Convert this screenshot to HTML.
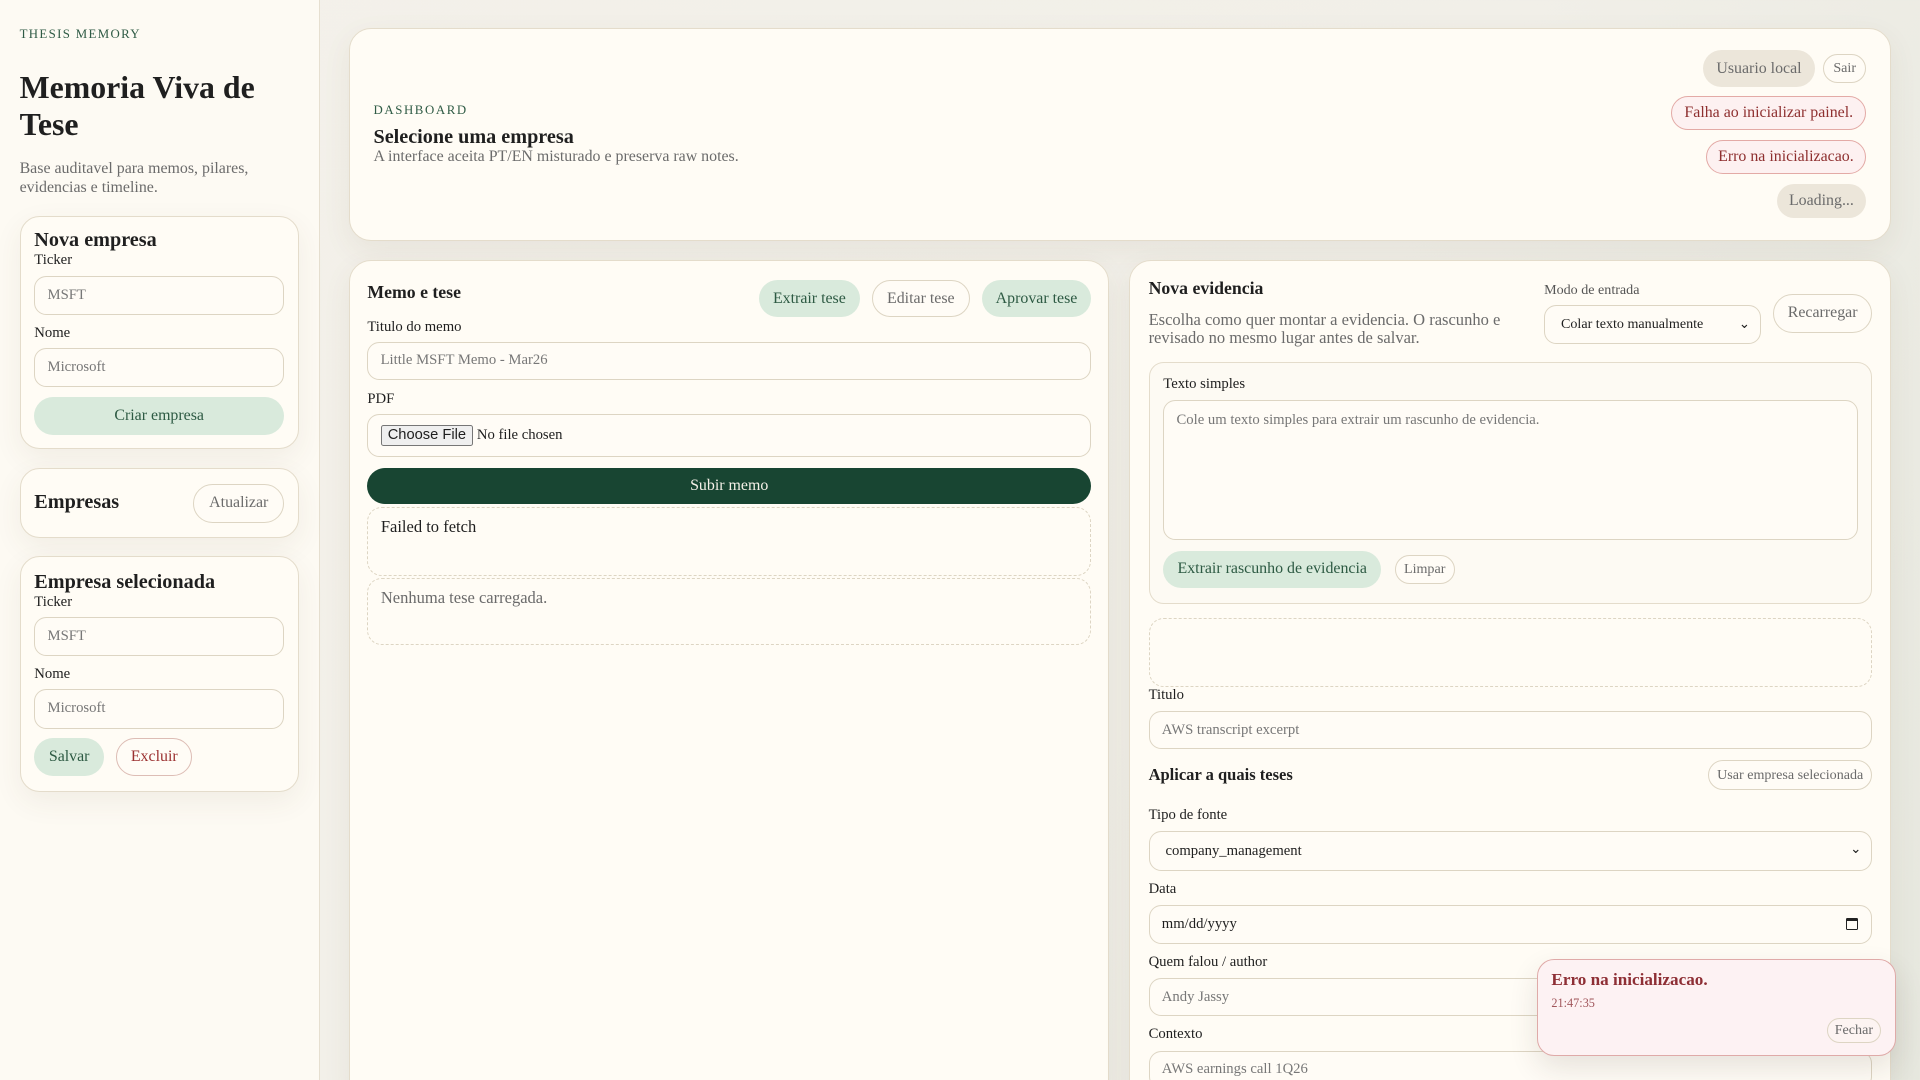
<!DOCTYPE html>
<html><head><meta charset="utf-8">
<style>
html{margin:0;padding:0;width:1920px;height:1080px;overflow:hidden}
body{margin:0;padding:0;width:1568px;height:882px;overflow:hidden;zoom:1.22449;font-family:"Liberation Serif",serif;color:#1f1f1f;background:linear-gradient(120deg,#f4f1ea 0%,#f1efe8 60%,#e6e7de 100%);position:relative}
.a{position:absolute;box-sizing:border-box}
.t{position:absolute;white-space:nowrap;line-height:1}
.card{position:absolute;box-sizing:border-box;background:#fffcf5;border:1px solid #e4dccb;border-radius:16px;box-shadow:0 8px 24px rgba(80,70,40,.07)}
.inp{position:absolute;box-sizing:border-box;background:#fffcf6;border:1px solid #ddd5c3;border-radius:10px;color:#777;font-size:12px;display:flex;align-items:center;padding-left:10px}
.btn{position:absolute;box-sizing:border-box;border-radius:16px;display:flex;align-items:center;justify-content:center;font-size:13px;white-space:nowrap}
.g{background:#d9eadc;color:#2d5a43}
.o{border:1px solid #ddd5c3;color:#6b6b6b;background:#fffcf6}
.lbl{position:absolute;font-size:12px;line-height:1;white-space:nowrap}
.dash{position:absolute;box-sizing:border-box;border:1px dashed #ddd5c3;border-radius:12px}
</style></head><body>
<div class="a" style="left:0;top:0;width:261px;height:882px;background:#fdfaf3;border-right:1px solid #e6dfd0"></div>
<div class="t" style="left:16px;top:23px;font-size:10.5px;letter-spacing:1.1px;color:#2f5b45">THESIS MEMORY</div>
<div class="t" style="left:16px;top:57px;font-size:26px;font-weight:bold;line-height:30px;white-space:normal;width:230px">Memoria Viva de Tese</div>
<div class="t" style="left:16px;top:131px;font-size:13px;line-height:15px;color:#6b6b6b;white-space:normal;width:230px">Base auditavel para memos, pilares, evidencias e timeline.</div>

<div class="card" style="left:16px;top:176px;width:228px;height:191px"></div>
<div class="t" style="left:28px;top:188px;font-size:16.5px;font-weight:bold">Nova empresa</div>
<div class="lbl" style="left:28px;top:207px">Ticker</div>
<div class="inp" style="left:28px;top:225px;width:204px;height:32px">MSFT</div>
<div class="lbl" style="left:28px;top:266px">Nome</div>
<div class="inp" style="left:28px;top:284px;width:204px;height:32px">Microsoft</div>
<div class="btn g" style="left:28px;top:324px;width:204px;height:31px">Criar empresa</div>

<div class="card" style="left:16px;top:382px;width:228px;height:57px"></div>
<div class="t" style="left:28px;top:402px;font-size:16.5px;font-weight:bold">Empresas</div>
<div class="btn o" style="left:158px;top:395px;width:74px;height:32px">Atualizar</div>

<div class="card" style="left:16px;top:454px;width:228px;height:193px"></div>
<div class="t" style="left:28px;top:467px;font-size:16.5px;font-weight:bold">Empresa selecionada</div>
<div class="lbl" style="left:28px;top:486px">Ticker</div>
<div class="inp" style="left:28px;top:504px;width:204px;height:32px">MSFT</div>
<div class="lbl" style="left:28px;top:545px">Nome</div>
<div class="inp" style="left:28px;top:563px;width:204px;height:32px">Microsoft</div>
<div class="btn g" style="left:28px;top:603px;width:57px;height:31px">Salvar</div>
<div class="btn o" style="left:95px;top:603px;width:62px;height:31px;color:#9b3030;border-color:#ddbdb5">Excluir</div>

<div class="card" style="left:285px;top:23px;width:1259px;height:174px;border-radius:18px"></div>
<div class="t" style="left:305px;top:85px;font-size:10.5px;letter-spacing:1.3px;color:#2f5b45">DASHBOARD</div>
<div class="t" style="left:305px;top:104px;font-size:16.5px;font-weight:bold">Selecione uma empresa</div>
<div class="t" style="left:305px;top:122px;font-size:13px;color:#6b6b6b">A interface aceita PT/EN misturado e preserva raw notes.</div>
<div class="btn" style="left:1391px;top:41px;width:91px;height:30px;background:#ece6da;color:#6b6b6b">Usuario local</div>
<div class="btn o" style="left:1489px;top:44px;width:35px;height:24px;font-size:11.5px">Sair</div>
<div class="btn" style="left:1365px;top:78px;width:159px;height:28px;background:#fdf1f1;border:1px solid #e3aaa6;color:#8e2f2f">Falha ao inicializar painel.</div>
<div class="btn" style="left:1393px;top:114px;width:131px;height:28px;background:#fdf1f1;border:1px solid #e3aaa6;color:#8e2f2f">Erro na inicializacao.</div>
<div class="btn" style="left:1451px;top:150px;width:73px;height:28px;background:#ece6da;color:#6b6b6b">Loading...</div>

<div class="card" style="left:285px;top:212px;width:621px;height:690px;border-radius:18px"></div>
<div class="t" style="left:300px;top:232px;font-size:14.5px;font-weight:bold">Memo e tese</div>
<div class="btn g" style="left:620px;top:229px;width:82px;height:30px">Extrair tese</div>
<div class="btn o" style="left:712px;top:229px;width:80px;height:30px">Editar tese</div>
<div class="btn g" style="left:802px;top:229px;width:89px;height:30px">Aprovar tese</div>
<div class="lbl" style="left:300px;top:261px">Titulo do memo</div>
<div class="inp" style="left:300px;top:279px;width:591px;height:31px">Little MSFT Memo - Mar26</div>
<div class="lbl" style="left:300px;top:320px">PDF</div>
<div class="inp" style="left:300px;top:338px;width:591px;height:35px;color:#1f1f1f;padding-left:10px">
<span style="font-family:'Liberation Sans',sans-serif;font-size:12px;background:#efefef;border:1px solid #767676;border-radius:2px;padding:1px 5px;margin-right:3px">Choose File</span>No file chosen</div>
<div class="btn" style="left:300px;top:382px;width:591px;height:30px;background:#184532;color:#f5f1e8">Subir memo</div>
<div class="dash" style="left:300px;top:414px;width:591px;height:56px"></div>
<div class="t" style="left:311px;top:424px;font-size:13.5px">Failed to fetch</div>
<div class="dash" style="left:300px;top:472px;width:591px;height:55px"></div>
<div class="t" style="left:311px;top:482px;font-size:13.5px;color:#6b6b6b">Nenhuma tese carregada.</div>

<div class="card" style="left:922px;top:212px;width:622px;height:690px;border-radius:18px"></div>
<div class="t" style="left:938px;top:229px;font-size:14.5px;font-weight:bold">Nova evidencia</div>
<div class="t" style="left:938px;top:254px;font-size:13.5px;line-height:15px;color:#6b6b6b;white-space:normal;width:300px">Escolha como quer montar a evidencia. O rascunho e revisado no mesmo lugar antes de salvar.</div>
<div class="lbl" style="left:1261px;top:231px;font-size:11.5px;color:#555">Modo de entrada</div>
<div class="inp" style="left:1261px;top:249px;width:177px;height:32px;color:#1f1f1f;font-size:11.5px;padding-left:13px">Colar texto manualmente<span style="position:absolute;right:8px;top:8px;font-size:11px">&#8964;</span></div>
<div class="btn o" style="left:1448px;top:240px;width:81px;height:32px">Recarregar</div>
<div class="a" style="left:938px;top:296px;width:591px;height:197px;border:1px solid #e4dccb;border-radius:12px;background:#fdfaf3"></div>
<div class="lbl" style="left:950px;top:308px">Texto simples</div>
<div class="inp" style="left:950px;top:327px;width:567px;height:114px;align-items:flex-start;padding-top:9px">Cole um texto simples para extrair um rascunho de evidencia.</div>
<div class="btn g" style="left:950px;top:450px;width:178px;height:30px">Extrair rascunho de evidencia</div>
<div class="btn o" style="left:1139px;top:453px;width:49px;height:24px;font-size:11.5px">Limpar</div>
<div class="dash" style="left:938px;top:505px;width:591px;height:56px"></div>
<div class="lbl" style="left:938px;top:562px">Titulo</div>
<div class="inp" style="left:938px;top:581px;width:591px;height:31px">AWS transcript excerpt</div>
<div class="t" style="left:938px;top:626px;font-size:13.5px;font-weight:bold">Aplicar a quais teses</div>
<div class="btn o" style="left:1395px;top:621px;width:134px;height:24px;font-size:11.5px">Usar empresa selecionada</div>
<div class="lbl" style="left:938px;top:660px">Tipo de fonte</div>
<div class="inp" style="left:938px;top:679px;width:591px;height:32px;color:#1f1f1f;padding-left:13px">company_management<span style="position:absolute;right:8px;top:7px;font-size:11px">&#8964;</span></div>
<div class="lbl" style="left:938px;top:720px">Data</div>
<div class="inp" style="left:938px;top:739px;width:591px;height:32px;color:#1f1f1f;padding-left:10px">mm/dd/yyyy<span style="position:absolute;right:11px;top:10px;width:10px;height:10px;border:1.5px solid #222;border-top-width:3px;border-radius:1px;box-sizing:border-box"></span></div>
<div class="lbl" style="left:938px;top:780px">Quem falou / author</div>
<div class="inp" style="left:938px;top:799px;width:591px;height:31px">Andy Jassy</div>
<div class="lbl" style="left:938px;top:839px">Contexto</div>
<div class="inp" style="left:938px;top:858px;width:591px;height:31px">AWS earnings call 1Q26</div>

<div class="a" style="left:1255px;top:783px;width:293px;height:79px;background:#fdf2f3;border:1px solid #dfaaa8;border-radius:14px;box-shadow:0 10px 24px rgba(60,40,30,.12)"></div>
<div class="t" style="left:1267px;top:793px;font-size:14px;font-weight:bold;color:#8e2f35">Erro na inicializacao.</div>
<div class="t" style="left:1267px;top:814px;font-size:10px;color:#a0555a">21:47:35</div>
<div class="btn o" style="left:1492px;top:831px;width:44px;height:21px;font-size:11.5px;background:#fdf4f2">Fechar</div>
</body></html>
